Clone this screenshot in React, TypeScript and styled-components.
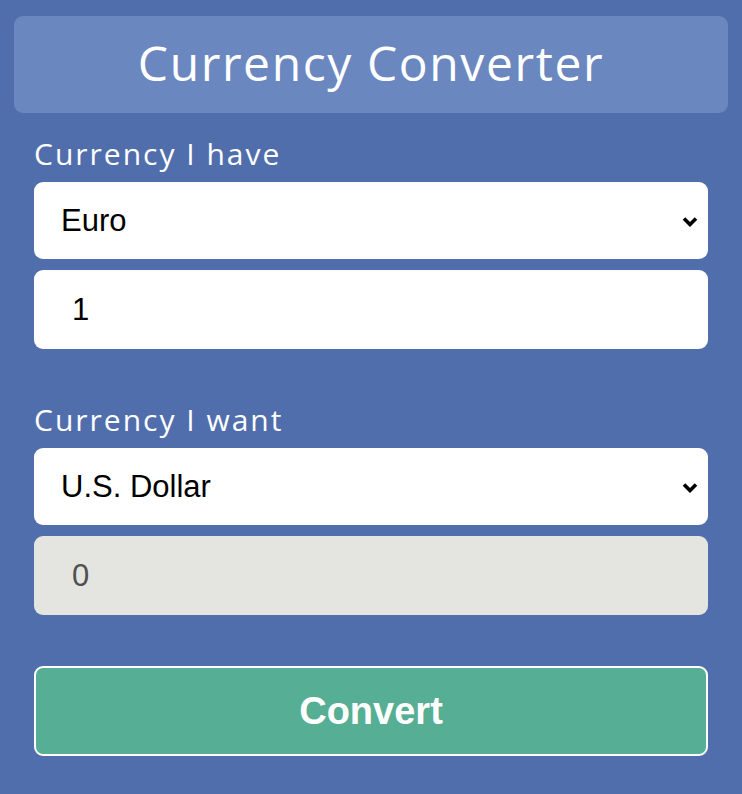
import React, { useState } from 'react';
import styled, { createGlobalStyle } from 'styled-components';

const GlobalStyle = createGlobalStyle`
  html, body {
    margin: 0;
    padding: 0;
    background: #516eac;
  }
  * {
    box-sizing: border-box;
  }
`;

const Page = styled.div`
  padding: 16px 14px 30px;
  font-family: 'Open Sans', sans-serif;
  color: #ffffff;
`;

const Header = styled.div`
  height: 97px;
  background: #6b87c0;
  border-radius: 9px;
  display: flex;
  align-items: center;
  justify-content: center;
`;

const Title = styled.h1`
  margin: 0 0 4px;
  font-family: 'Open Sans', sans-serif;
  font-weight: 400;
  font-size: 48px;
  letter-spacing: 1.6px;
  color: #ffffff;
`;

const Form = styled.div`
  padding: 0 20px;
  display: flex;
  flex-direction: column;
`;

const Group = styled.div<{ $top: number }>`
  margin-top: ${(p) => p.$top}px;
  display: flex;
  flex-direction: column;
  gap: 11px;
`;

const Label = styled.label`
  font-family: 'Open Sans', sans-serif;
  font-size: 30px;
  line-height: 36px;
  letter-spacing: 2px;
  margin-bottom: -1px;
`;

const SelectWrap = styled.div`
  position: relative;
  height: 77px;
`;

const Select = styled.select`
  appearance: none;
  -webkit-appearance: none;
  width: 100%;
  height: 100%;
  border: none;
  border-radius: 9px;
  background: #ffffff;
  padding: 0 50px 0 27px;
  font-family: 'Liberation Sans', Arial, sans-serif;
  font-size: 31px;
  color: #000000;
  outline: none;
`;

const Chevron = styled.svg`
  position: absolute;
  right: 10px;
  top: 50%;
  width: 16px;
  height: 11px;
  margin-top: -5px;
  pointer-events: none;
`;

const Input = styled.input<{ $muted?: boolean }>`
  width: 100%;
  height: 79px;
  border: none;
  border-radius: 9px;
  background: ${(p) => (p.$muted ? '#e4e5e0' : '#ffffff')};
  color: ${(p) => (p.$muted ? '#505050' : '#000000')};
  padding: 0 0 0 38px;
  font-family: 'Liberation Sans', Arial, sans-serif;
  font-size: 31px;
  outline: none;
`;

const Button = styled.button`
  margin-top: 51px;
  height: 90px;
  width: 100%;
  background: #56ae94;
  border: 2px solid #ffffff;
  border-radius: 9px;
  color: #ffffff;
  font-family: 'Liberation Sans', Arial, sans-serif;
  font-weight: 700;
  font-size: 38px;
  cursor: pointer;
`;

const currencies = ['Euro', 'U.S. Dollar', 'British Pound', 'Japanese Yen'];

function CurrencySelect({ value, onChange }: { value: string; onChange: (v: string) => void }) {
  return (
    <SelectWrap>
      <Select value={value} onChange={(e) => onChange(e.target.value)}>
        {currencies.map((c) => (
          <option key={c} value={c}>
            {c}
          </option>
        ))}
      </Select>
      <Chevron viewBox="0 0 16 11">
        <polyline points="2,2.5 8,8.5 14,2.5" fill="none" stroke="#000" strokeWidth="3.6" />
      </Chevron>
    </SelectWrap>
  );
}

export default function App() {
  const [from, setFrom] = useState('Euro');
  const [to, setTo] = useState('U.S. Dollar');
  const [amount, setAmount] = useState('1');

  return (
    <Page>
      <GlobalStyle />
      <Header>
        <Title>Currency Converter</Title>
      </Header>
      <Form>
        <Group $top={23}>
          <Label>Currency I have</Label>
          <CurrencySelect value={from} onChange={setFrom} />
          <Input value={amount} onChange={(e) => setAmount(e.target.value)} />
        </Group>
        <Group $top={53}>
          <Label>Currency I want</Label>
          <CurrencySelect value={to} onChange={setTo} />
          <Input $muted disabled value="0" readOnly />
        </Group>
        <Button>Convert</Button>
      </Form>
    </Page>
  );
}
